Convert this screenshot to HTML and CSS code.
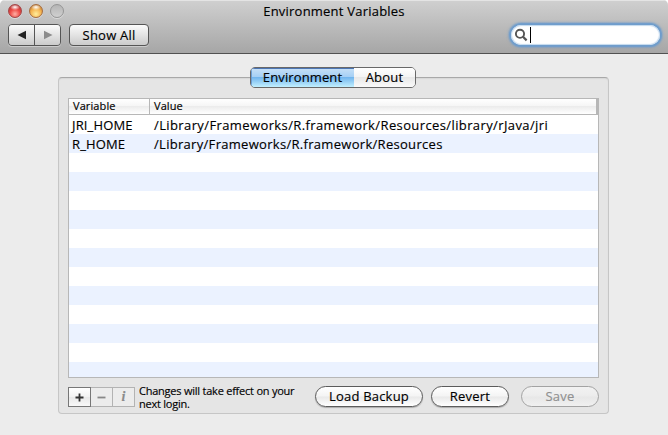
FILE: index.html
```html
<!DOCTYPE html>
<html lang="en">
<head>
<meta charset="utf-8">
<title>Environment Variables</title>
<link rel="stylesheet" href="styles.css">
</head>
<body>
<div class="window">
  <header class="toolbar">
    <div class="lights"><i class="light red"></i><i class="light amber"></i><i class="light off"></i></div>
    <h1 class="title">Environment Variables</h1>
    <div class="controls">
      <div class="nav">
        <button aria-label="Back"><svg width="10" height="10" viewBox="0 0 10 10"><path d="M9 .8v8.4L.5 5z" fill="#222"/></svg></button>
        <button aria-label="Forward"><svg width="10" height="10" viewBox="0 0 10 10"><path d="M1 .8v8.4L9.5 5z" fill="#8c8c8c"/></svg></button>
      </div>
      <button class="showall"><span>Show All</span></button>
      <div class="search">
        <svg width="14" height="14" viewBox="0 0 14 14" fill="none" stroke="#555"><circle cx="6" cy="5.8" r="4.1" stroke-width="1.9"/><path d="M9 8.8l3.6 3.6" stroke-width="2.2"/></svg>
        <i class="caret"></i>
      </div>
    </div>
  </header>
  <main class="pane">
    <nav class="tabs"><button class="tab active"><span>Environment</span></button><button class="tab"><span>About</span></button></nav>
    <div class="table">
      <div class="thead"><div class="c1">Variable</div><div class="c2">Value</div><i class="corner"></i></div>
      <div class="tbody">
        <div class="row"><div class="c1">JRI_HOME</div><div class="c2 long">/Library/Frameworks/R.framework/Resources/library/rJava/jri</div></div>
        <div class="row"><div class="c1">R_HOME</div><div class="c2">/Library/Frameworks/R.framework/Resources</div></div>
      </div>
    </div>
    <footer class="actions">
      <div class="squares">
        <button class="sq on" aria-label="Add"><svg width="9" height="9" viewBox="0 0 9 9"><path d="M4.5.5v8M.5 4.5h8" stroke="#333" stroke-width="1.8"/></svg></button>
        <button class="sq" aria-label="Remove"><svg width="9" height="9" viewBox="0 0 9 9"><path d="M.5 4.5h8" stroke="#888" stroke-width="1.8"/></svg></button>
        <button class="sq info">i</button>
      </div>
      <p class="note"><span>Changes will take effect on your</span><br><span>next login.</span></p>
      <button class="pill load"><span>Load Backup</span></button>
      <button class="pill revert"><span>Revert</span></button>
      <button class="pill save" disabled><span>Save</span></button>
    </footer>
  </main>
</div>
</body>
</html>
```
FILE: styles.css
```css
* { box-sizing: border-box; }
body { margin: 0; background: #fff; font: 13px/16px "Open Sans", "Noto Sans", sans-serif; color: #000; -webkit-text-stroke: .15px; }
button { margin: 0; padding: 0; font: inherit; color: inherit; display: flex; align-items: center; justify-content: center; white-space: nowrap; }
button span { padding-bottom: 2px; }
span { white-space: nowrap; }
.window { width: 668px; height: 435px; background: #ececec; border-radius: 5px 5px 0 0; overflow: hidden; }
.toolbar { height: 54px; background: linear-gradient(#d0d0d0, #a6a6a6); border-bottom: 1px solid #515151; box-shadow: inset 0 1px #e4e4e4; display: grid; grid-template: 24px 29px / 70px 1fr 70px; }
.lights { display: flex; gap: 7px; padding: 4px 0 0 8px; }
.light { width: 14px; height: 14px; border-radius: 50%; box-shadow: 0 1px rgba(255,255,255,.4); }
.red { background: radial-gradient(ellipse 5px 3px at 50% 18%, #fff, transparent), radial-gradient(circle at 50% 75%, #ffb0a5 0, #ee4c47 45%, #9b2c2c 100%); border: 1px solid #a34546; }
.amber { background: radial-gradient(ellipse 5px 3px at 50% 18%, #fff, transparent), radial-gradient(circle at 50% 75%, #ffee9c 0, #f4b350 50%, #a56228 100%); border: 1px solid #a66d3e; }
.off { background: linear-gradient(#b5b5b5, #d0d0d0); border: 1px solid #959595; }
.title { margin: 0; padding-top: 3px; font-size: 13px; font-weight: 400; line-height: 16px; text-align: center; letter-spacing: .22px; }
.controls { grid-column: 1 / 4; display: flex; align-items: flex-start; padding-left: 8px; }
.nav { display: flex; width: 53px; height: 22px; border: 1px solid #555; border-radius: 4px; overflow: hidden; box-shadow: 0 1px rgba(255,255,255,.4); }
.nav button { flex: 1; border: 0; background: linear-gradient(#fbfbfb, #cbcbcb); }
.nav button + button { border-left: 1px solid #555; }
.showall { width: 80px; height: 22px; margin-left: 8px; border: 1px solid #555; border-radius: 4px; background: linear-gradient(#fbfbfb, #cbcbcb); box-shadow: 0 1px rgba(255,255,255,.4); letter-spacing: .2px; }
.showall span { padding-bottom: 0; }
.search { width: 149px; height: 20px; margin: 1px 8px 0 auto; border-radius: 10px; background: #fff; box-shadow: inset 0 0 1px 1px #c3d9ee, 0 0 1px 2px #6f9dcc, 0 0 2px 3px rgba(111,157,204,.55); display: flex; align-items: center; padding-left: 3px; }
.caret { width: 1px; height: 16px; background: #000; margin-left: 2px; }
.pane { width: 551px; height: 337px; margin: 23px 0 0 58px; padding: 0 9px; border: 1px solid #c6c6c6; border-top-color: #a8a8a8; border-radius: 4px; background: #e5e5e5; box-shadow: inset 0 1px 1px #d7d7d7; }
.tabs { display: flex; width: 166px; height: 21px; margin: -11px 0 10px 182px; border: 1px solid #686868; border-radius: 5px; overflow: hidden; }
.tab { flex: 1; border: 0; background: linear-gradient(#fff, #f3f3f3 50%, #e8e8e8 50%, #fafafa); letter-spacing: .2px; }
.tab span { padding-bottom: 1px; }
.tab.active { flex: 0 0 103px; background: linear-gradient(#c8e1f7, #a4cff5 48%, #73b6ee 50%, #c2f0ff); box-shadow: inset 0 1px #4c75b3, inset 1px 0 #6b9fd7; letter-spacing: .12px; }
.table { width: 531px; height: 280px; border: 1px solid #b7b7b7; background: #fff; }
.thead { display: flex; height: 16px; border-bottom: 1px solid #b7b7b7; background: linear-gradient(#fff, #f6f6f6 45%, #ececec 50%, #fff); font-size: 11px; line-height: 14px; letter-spacing: .1px; }
.c1 { width: 81px; }
.c2 { flex: 1; }
.thead .c1 { border-right: 1px solid #b7b7b7; padding-left: 4px; }
.thead .c2 { padding-left: 4px; }
.corner { width: 2px; background: #b7b7b7; }
.tbody { height: 262px; background: repeating-linear-gradient(#fff 0 19px, #ebf2ff 19px 38px); }
.row { display: flex; height: 19px; line-height: 20px; }
.row .c1 { padding-left: 3px; letter-spacing: .15px; }
.row .c2 { padding-left: 4px; letter-spacing: .3px; }
.row .long { letter-spacing: .39px; }
.actions { display: flex; margin-top: 8px; height: 24px; }
.squares { display: flex; width: 67px; height: 21px; margin-top: 1px; }
.sq { width: 22px; height: 20px; border: 1px solid #b3b3b3; border-left: 0; background: #ececec; }
.sq.on { width: 23px; border: 1px solid #777; background: linear-gradient(#fff, #f2f2f2 50%, #e8e8e8 50%, #f8f8f8); }
.info { font: italic bold 14px/16px "Liberation Serif", serif; color: #8a8a8a; }
.note { width: 176px; margin: -2px 0 0 4px; font-size: 11px; line-height: 13px; letter-spacing: -.23px; }
.pill { height: 21px; border: 1px solid #5c5c5c; border-radius: 11px; background: linear-gradient(#fff, #f4f4f4 48%, #e9e9e9 52%, #fff); box-shadow: 0 1px 1px rgba(0,0,0,.25); letter-spacing: .2px; }
.load { width: 108px; }
.revert { width: 78px; margin-left: 8px; }
.save { width: 78px; margin-left: 12px; border-color: #a3a3a3; background: linear-gradient(#f2f2f2, #ececec 48%, #e7e7e7 52%, #f0f0f0); color: #909090; box-shadow: none; }
```
